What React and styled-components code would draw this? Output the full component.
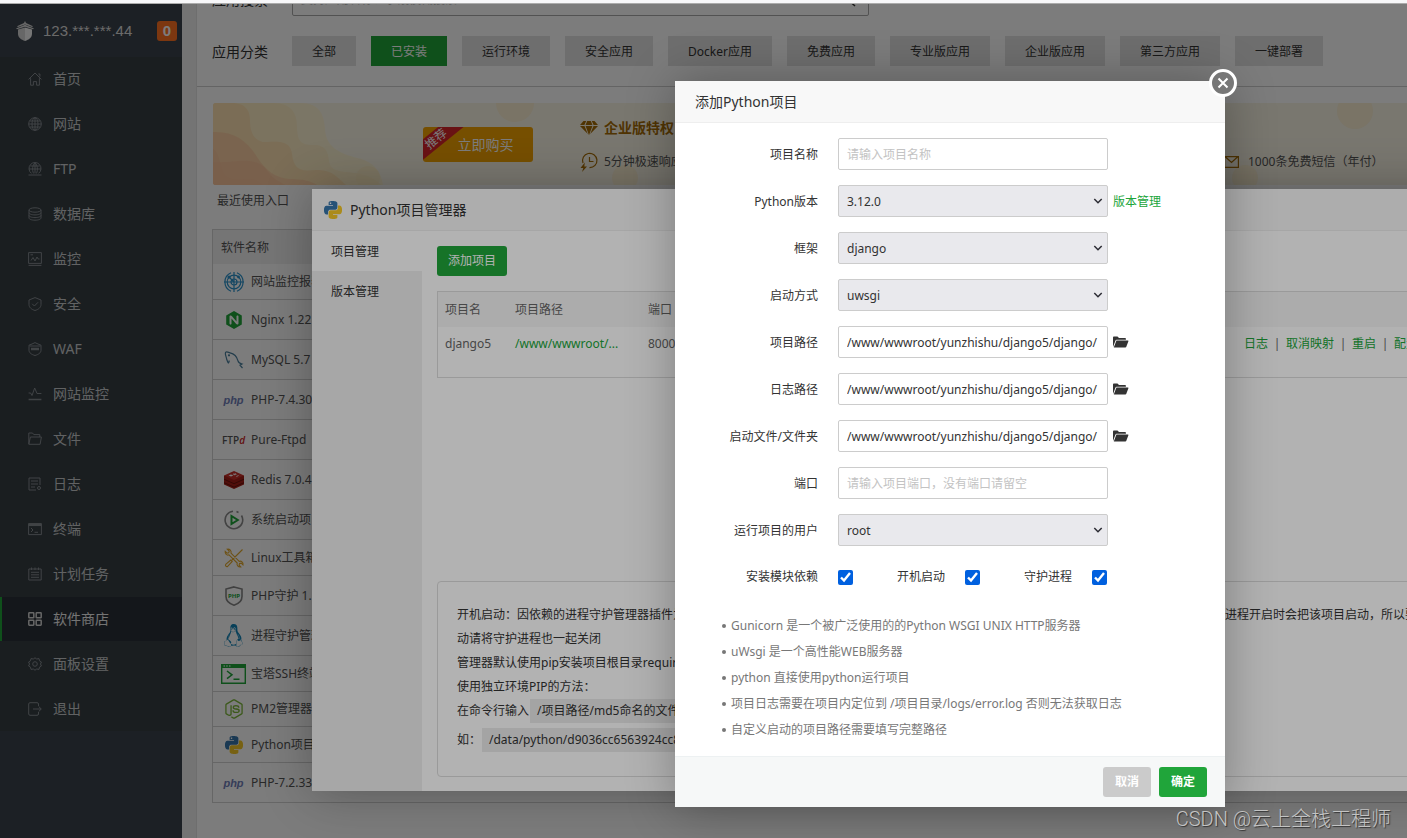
import React, { useState } from 'react'
import styled, { createGlobalStyle, css } from 'styled-components'
import { FaLinux, FaNodeJs } from 'react-icons/fa'
import { SiNginx } from 'react-icons/si'

const GlobalStyle = createGlobalStyle`
    * {
        box-sizing: border-box;
    }
    body {
        margin: 0;
        font-family: 'Noto Sans', 'Noto Sans CJK SC', sans-serif;
        font-size: 12px;
        line-height: 20px;
        color: #333;
        overflow: hidden;
    }
    input, select, button {
        font: inherit;
        color: inherit;
    }
    a {
        text-decoration: none;
    }
    svg {
        display: block;
        flex-shrink: 0;
    }
`

/* ---------- icons ---------- */

const Stroke = ({ size = 14, children, width = 1 }) => (
    <svg width={size} height={size} viewBox="0 0 14 14" fill="none" stroke="currentColor" strokeWidth={width} strokeLinejoin="round">
        {children}
    </svg>
)

const menuIcons = {
    home: <Stroke><path d="M.6 7.4 7 1l6.4 6.4M10.3 2h1.6v2.6M2.6 6.2v7h2.8V9.6h3.2v3.6h2.8v-7" /></Stroke>,
    site: <Stroke><circle cx="7" cy="7" r="6.3" /><ellipse cx="7" cy="7" rx="3" ry="6.3" /><path d="M.8 7h12.4M7 .7v12.6M1.7 4h10.6M1.7 10h10.6" /></Stroke>,
    ftp: <Stroke><path d="M3.500 11.400a6 6 0 1 1 7 0M5.500 11.400C4 8 4.300 3 7 1c2.700 2 3 7 1.500 10.400M1 7h12M2.300 4h9.400M7 1v10.400M.5 13h13" /></Stroke>,
    db: <Stroke><ellipse cx="7" cy="3" rx="6" ry="2.2" /><path d="M1 3v8c0 1.200 2.700 2.200 6 2.200s6-1 6-2.200V3M1 5.700c0 1.200 2.700 2.200 6 2.200s6-1 6-2.200M1 8.400c0 1.200 2.700 2.200 6 2.200s6-1 6-2.200" /></Stroke>,
    monitor: <Stroke><path d="M.6.6h12.800v10.800H.6zM.6 13.400h12.800M3 8.500l2-3 2 3.500L9 5l1.200 2h1.300M2.500 2.800H5" /></Stroke>,
    shield: <Stroke><path d="M7 .6 13 3v4.500c0 3-2.500 4.900-6 6-3.500-1.100-6-3-6-6V3zM4.200 6.800 6.400 9 10 5.300" /></Stroke>,
    waf: <Stroke><path d="M1 4.500V3.200L4 2l3-1.400L10 2l3 1.200v5.100c0 2.500-2.500 4.200-6 5.200-3.500-1-6-2.700-6-5.200zM1.500 4h11" /><path d="M3 7h8" strokeWidth="2.500" /></Stroke>,
    pulse: <Stroke><path d="M.6 6h2L4 8.500 6.700 1 9 6.500h4.400" /><path d="M.6 12.500h12.800" strokeWidth="1.500" /></Stroke>,
    folder: <Stroke><path d="M.8 12V1h3.700l1.300 1.600h6V5M.8 12.300 2.400 5h11l-1.300 7.300z" /></Stroke>,
    log: <Stroke><path d="M8 13H1V1h11v7M3 4h7M3 7h7M3 10h4" /><circle cx="11" cy="11" r="1.500" /></Stroke>,
    terminal: <Stroke><path d="M.6 1.600h12.800v11H.6z" /><path d="M.6 2.800h12.800" strokeWidth="2.500" /><path d="m3 6 2 2-2 2M6.500 10.300H10" /></Stroke>,
    cron: <Stroke><path d="M.8 2h12.400v11H.8zM3.500.5V3M7 .5V3M10.500.5V3M3 5.300h8M3 7.800h8M3 10.300h8" /></Stroke>,
    store: <Stroke width={1.5}><rect x=".8" y=".8" width="5" height="5" rx=".6" /><rect x="8.200" y=".8" width="5" height="5" rx=".6" /><rect x=".8" y="8.200" width="5" height="5" rx=".6" /><rect x="8.200" y="8.200" width="5" height="5" rx=".6" /></Stroke>,
    setting: <Stroke><path d="M5.300 2 7 .8 8.700 2l2.300-.4.500 2.200 1.900 1.200-.9 2 .9 2-1.900 1.200-.5 2.200-2.300-.4L7 13.200 5.300 12l-2.300.4-.5-2.200L.6 9l.9-2-.9-2 1.900-1.200.5-2.200z" /><circle cx="7" cy="7" r="2.300" /></Stroke>,
    exit: <Stroke><path d="M10.500 4V2A1.400 1.400 0 0 0 9 .7H2A1.400 1.400 0 0 0 .7 2v10A1.400 1.400 0 0 0 2 13.300h7a1.400 1.400 0 0 0 1.500-1.300v-2M5 7h8M10.700 4.500 13.300 7l-2.600 2.500" /></Stroke>,
}

const TowerLogo = () => (
    <svg width="18" height="20" viewBox="0 0 18 20" fill="#d5d5d5">
        <path d="M9 0 10 2 17 5.300 16 6 9 3.500 2 6 1 5.300 8 2z" />
        <path d="M9 3.800 18 7.500l-1 .8L9 5.800 1 8.300l-1-.8z" />
        <path d="M2 8.600 9 6.500v13.400C5 18.800 2.200 16.500 2 13z" />
        <path d="M16 8.600 9 6.500v13.400c4-1.100 6.800-3.400 7-6.900z" fill="#f2f2f2" />
    </svg>
)

const PythonLogo = ({ size = 18 }) => (
    <svg width={size} height={size} viewBox="0 0 24 24">
        <path fill="#3776ab" d="M14.25.18l.9.2.73.26.59.3.45.32.34.34.25.34.16.33.1.3.04.26.02.2-.01.13V8.5l-.05.63-.13.55-.21.46-.26.38-.3.31-.33.25-.35.19-.35.14-.33.1-.3.07-.26.04-.21.02H8.77l-.69.05-.59.14-.5.22-.41.27-.33.32-.27.35-.2.36-.15.37-.1.35-.07.32-.04.27-.02.21v3.06H3.17l-.21-.03-.28-.07-.32-.12-.35-.18-.36-.26-.36-.36-.35-.46-.32-.59-.28-.73-.21-.88-.14-1.05-.05-1.23.06-1.22.16-1.04.24-.87.32-.71.36-.57.4-.44.42-.33.42-.24.4-.16.36-.1.32-.05.24-.01h.16l.06.01h8.16v-.83H6.18l-.01-2.75-.02-.37.05-.34.11-.31.17-.28.25-.26.31-.23.38-.2.44-.18.51-.15.58-.12.64-.1.71-.06.77-.04.84-.02 1.27.05zm-6.3 1.98l-.23.33-.08.41.08.41.23.34.33.22.41.09.41-.09.33-.22.23-.34.08-.41-.08-.41-.23-.33-.33-.22-.41-.09-.41.09z" />
        <path fill="#f5c828" d="M21.04 6.11l.28.06.32.12.35.18.36.27.36.35.35.47.32.59.28.73.21.88.14 1.04.05 1.23-.06 1.23-.16 1.04-.24.86-.32.71-.36.57-.4.45-.42.33-.42.24-.4.16-.36.09-.32.05-.24.02-.16-.01h-8.22v.82h5.84l.01 2.76.02.36-.05.34-.11.31-.17.29-.25.25-.31.24-.38.2-.44.17-.51.15-.58.13-.64.09-.71.07-.77.04-.84.01-1.27-.04-1.07-.14-.9-.2-.73-.25-.59-.3-.45-.33-.34-.34-.25-.34-.16-.33-.1-.3-.04-.25-.02-.2.01-.13v-5.34l.05-.64.13-.54.21-.46.26-.38.3-.32.33-.24.35-.2.35-.14.33-.1.3-.06.26-.04.21-.02.13-.01h5.84l.69-.05.59-.14.5-.21.41-.28.33-.32.27-.35.2-.36.15-.36.1-.35.07-.32.04-.28.02-.21V6.07h2.09l.14.01z" />
    </svg>
)

const RadarIcon = () => (
    <svg width="22" height="20" viewBox="0 0 22 20" fill="none" stroke="#2a92cc" strokeWidth="1.200">
        <path d="M8 .8A10 10 0 0 0 8 19.200M14 .8a10 10 0 0 1 0 18.400" />
        <circle cx="11" cy="10" r="6.800" />
        <circle cx="11" cy="10" r="3" />
        <path d="M11 0v20M1 10h20M6 5l5 5" />
        <circle cx="6" cy="5" r="1" fill="#2a92cc" />
        <circle cx="15.500" cy="5" r=".8" fill="#2a92cc" />
    </svg>
)

const DolphinIcon = () => (
    <svg width="20" height="20" viewBox="0 0 20 20" fill="none" stroke="#4a7f9c" strokeWidth="1.200">
        <path d="M2.500 8.500C2 6 .8 4 1.500 2.500c1-1.500 3 0 4.500.3 4 .8 7 4 8 8 .3 1.400 1.500 2.500 4 3.200l-2 1.200 2.500 2.800M2.500 8.500c.5 1.500 1 3.500 1.800 4.500.9-.5.700-1.800 1-2.500" />
        <circle cx="5" cy="5.300" r=".5" />
    </svg>
)

const RedisIcon = () => (
    <svg width="20" height="18" viewBox="0 0 20 18">
        <path fill="#a51f17" d="M0 4.500v9L10 18l10-4.500v-9z" />
        <path fill="#c9302a" d="M0 4.500 10 0l10 4.500L10 9z" />
        <path d="M0 8.200 10 12.700l10-4.500M0 11.700l10 4.400 10-4.400" fill="none" stroke="#6d120d" strokeWidth="1" />
        <path fill="#fff" d="m4.500 4.200 2.500-.8 2.400 1-2.400 1zM9 2.200l1.500.6 1.800-.7-.6 1 1.500.6-2 .1-.5.700-.4-.7-2-.2 1.300-.5zM12.500 5l3-1.200-3 2.500z" />
    </svg>
)

const BootIcon = () => (
    <svg width="20" height="20" viewBox="0 0 20 20" fill="none" strokeWidth="1.600">
        <path stroke="#8a8a8a" d="M9 1.200A8.800 8.800 0 1 0 17.500 5.500M12.500 1.600l2 .9" />
        <path stroke="#20a53a" strokeWidth="2" d="M7.500 6v8l6.300-4z" />
    </svg>
)

const ToolsIcon = () => (
    <svg width="20" height="20" viewBox="0 0 20 20" fill="none" stroke="#e2a92d" strokeWidth="1.100">
        <path d="M18.500 1.500 8 12M6.800 12l1.400 1.400-4.500 5c-1.400.7-2.800-.6-2-2zM3.200 1.200l2 1.900-.5 1.700-1.700.3-1.800-1.800C.8 6 3 7.700 5 6.800l8.200 8.200c-.8 2.200 1 4.200 3.500 3.900l-1.600-1.800.4-1.600 1.700-.4 1.800 1.800c.5-2.600-1.800-4.300-3.800-3.500L7 5.200C7.700 3 5.800.8 3.200 1.200z" />
    </svg>
)

const PhpGuardIcon = () => (
    <svg width="18" height="20" viewBox="0 0 18 20" fill="none">
        <path stroke="#858585" strokeWidth="1.600" d="M9 .9 17 3v7.500c0 4.300-3.200 7.200-8 8.700-4.800-1.500-8-4.400-8-8.700V3z" />
        <text x="9" y="11.500" fontSize="6" fontWeight="700" textAnchor="middle" fill="#20a53a">PHP</text>
    </svg>
)

const SshIcon = () => (
    <svg width="25" height="20" viewBox="0 0 25 20" fill="none">
        <path stroke="#20a53a" strokeWidth="1.400" d="M.7.7h23.600v18.600H.7z" />
        <path fill="#20a53a" d="M0 0h25v4H0z" />
        <path stroke="#bfe6c7" strokeWidth="1.400" d="M2.500 2H4m1.200 0h1.500M8 2h1.500" />
        <path stroke="#20a53a" strokeWidth="1.500" d="m6 7 5 3.800-5 3.800M12.500 15.300h6" />
    </svg>
)

const FolderOpenIcon = () => (
    <svg width="16" height="12" viewBox="0 0 16 12" fill="#333">
        <path d="M0 11V1.500C0 1 .4.500 1 .5h3.500L6 2h6c.5 0 .9.400.9 1v.8H3.600c-.5 0-.9.200-1.100.7z" />
        <path d="M3.400 4.600H15c.4 0 .5.200.4.600l-2.200 5.900c-.1.300-.4.500-.8.500H.8z" />
    </svg>
)

const ChevronIcon = () => (
    <svg width="10" height="10" viewBox="0 0 10 10" fill="none" stroke="#2b2b33" strokeWidth="1.500">
        <path d="M1.300 3 5 6.700 8.700 3" />
    </svg>
)

const GemIcon = () => (
    <svg width="18" height="16" viewBox="0 0 18 16" fill="#a56c06">
        <path d="M3.500 1h2.700L4.400 5H0zM7.200 1h3.600l1.700 4H5.500zM11.800 1h2.700L18 5h-4.400zM0 6h4.500l3.300 8zM5.600 6h6.800L9 15.200zM13.500 6H18l-7.800 8z" />
    </svg>
)

const QuickIcon = () => (
    <svg width="18" height="20" viewBox="0 0 18 20" fill="none" stroke="#a56c06" strokeWidth="1.200">
        <path d="M3 11A7.200 7.200 0 1 1 9.500 15.700M9.500 5v4.500h4" />
        <path d="M4.800 10.500.5 16h2.800L2 20l5-5.500H4.300z" fill="#a56c06" stroke="none" />
    </svg>
)

const MailIcon = () => (
    <svg width="15" height="12" viewBox="0 0 15 12" fill="none" stroke="#a56c06" strokeWidth="1.200">
        <path d="M.6.6h13.800v10.800H.6zM1.500 1l6 5.500 6-5.500" />
    </svg>
)

/* ---------- page shell ---------- */

const Shell = styled.div`
    height: 100vh;
    display: flex;
    flex-direction: column;
    overflow: hidden;
`

const TopStrip = styled.div`
    flex: 0 0 4px;
    background: #f7f7f9;
    border-bottom: 1px solid #ababab;
`

const Stage = styled.div`
    flex: 1;
    min-height: 0;
    position: relative;
    display: flex;
    overflow: hidden;
    background: #f0f0f0;
`

const Sidebar = styled.aside`
    flex: 0 0 182px;
    background: #3c444d;
`

const Host = styled.header`
    height: 53px;
    display: flex;
    align-items: center;
    padding: 0 5px 0 16px;
    gap: 9px;
    font-family: 'Liberation Sans', sans-serif;
    font-size: 15px;
    color: #dcdcdc;
`

const Badge = styled.span`
    margin-left: auto;
    width: 20px;
    height: 20px;
    border-radius: 3px;
    background: #ff7322;
    color: #fff;
    font-weight: 700;
    text-align: center;
`

const Menu = styled.nav`
    display: flex;
    flex-direction: column;
    gap: 1px;
    background: #373f44;
`

const MenuItem = styled.a`
    height: 44px;
    display: flex;
    align-items: center;
    gap: 11px;
    padding-left: 26px;
    border-left: 2px solid transparent;
    font-size: 14px;
    color: #c9cbcd;
    svg {
        color: #858b90;
    }
    ${({ $active }) => $active && css`
        background: #2c3138;
        border-left-color: #20a53a;
        color: #eee;
        svg {
            color: #d5d5d5;
        }
    `}
`

const Main = styled.main`
    flex: 1;
    min-width: 0;
    margin-left: 14px;
    border-left: 1px solid #e2e2e2;
    background: #fff;
    overflow: hidden;
`

/* only the bottom edge of the search box is still in view */
const SearchRow = styled.div`
    height: 12px;
    display: flex;
    align-items: flex-end;
    padding-left: 15px;
    label {
        width: 80px;
        font-size: 14px;
        line-height: 32px;
    }
`

const SearchBox = styled.div`
    width: 577px;
    height: 32px;
    display: flex;
    align-items: center;
    padding: 0 12px 0 8px;
    border: 1px solid #aaa;
    border-radius: 2px;
    input {
        flex: 1;
        border: 0;
        padding: 0;
        background: none;
        outline: none;
    }
    input::placeholder {
        color: #bbb;
    }
`

const Categories = styled.div`
    display: flex;
    align-items: center;
    gap: 15px;
    padding: 20px 0 20px 15px;
    border-bottom: 1px solid #cfcfcf;
    white-space: nowrap;
`

const CategoryTitle = styled.span`
    width: 65px;
    padding-top: 2px;
    font-size: 14px;
`

const Category = styled.button`
    height: 30px;
    padding: 2px 20px 0;
    border: 0;
    background: ${({ $active }) => ($active ? '#20a53a' : '#e3e3e3')};
    color: ${({ $active }) => ($active ? '#fff' : '#333')};
`

const Body = styled.div`
    padding: 16px 0 0 15px;
`

const Banner = styled.section`
    display: grid;
    height: 82px;
    margin-left: 1px;
    border-radius: 3px 0 0 3px;
    overflow: hidden;
    background: #faf5e6;
    > * {
        grid-area: 1 / 1;
    }
`

const BannerContent = styled.div`
    display: flex;
    align-items: center;
    gap: 47px;
    padding-left: 210px;
    white-space: nowrap;
`

const BuyButton = styled.button`
    position: relative;
    width: 110px;
    height: 35px;
    padding: 2px 0 0 15px;
    border: 0;
    border-radius: 3px;
    overflow: hidden;
    background: #f3a200;
    font-size: 14px;
    color: #fff;
`

const Ribbon = styled.span`
    position: absolute;
    top: 4px;
    left: -20px;
    width: 66px;
    height: 16px;
    background: #d9262c;
    font-size: 12px;
    line-height: 16px;
    text-align: center;
    transform: rotate(-39deg);
`

const Perks = styled.div`
    display: grid;
    grid-template-columns: 644px auto;
    row-gap: 14px;
    padding-top: 2px;
    color: #555;
    div {
        display: grid;
        grid-template-columns: 18px auto;
        justify-content: start;
        align-items: center;
        gap: 6px;
        height: 20px;
    }
    h4 {
        margin: 0;
        font-size: 14px;
        color: #a56c06;
    }
`

const Recent = styled.p`
    margin: 6px 0 18px 5px;
    color: #555;
`

const SoftTable = styled.table`
    width: 100%;
    border-collapse: separate;
    border-spacing: 0;
    border: 1px solid #d3d3d3;
    border-width: 1px 0 0 1px;
    color: #555;
    th {
        height: 34px;
        padding: 2px 8px 0;
        background: #f1f1f1;
        font-weight: 400;
        text-align: left;
    }
`

const SoftCell = styled.td`
    height: ${({ $h }) => $h}px;
    padding: 0 0 0 8px;
    border-bottom: 1px solid #d3d3d3;
    > span {
        display: grid;
        grid-template-columns: 25px auto;
        justify-content: start;
        justify-items: center;
        align-items: center;
        gap: 5px;
    }
`

const PhpMark = styled.b`
    font-family: 'Liberation Sans', sans-serif;
    font-size: 11px;
    font-style: italic;
    color: #7080b8;
`

const FtpMark = styled.b`
    font-family: 'Open Sans', sans-serif;
    font-size: 10px;
    font-weight: 600;
    i {
        color: #cc1f1f;
    }
`

/* ---------- layered windows ---------- */

const Mask = styled.div`
    position: absolute;
    inset: 0;
    background: rgba(0, 0, 0, 0.3);
`

const Layer = styled.section`
    position: absolute;
    top: ${({ $top }) => $top}px;
    left: ${({ $left }) => $left}px;
    width: ${({ $width }) => $width}px;
    background: #fff;
    border-radius: 2px;
    box-shadow: 1px 1px 50px rgba(0, 0, 0, 0.3);
`

const LayerTitle = styled.h3`
    display: flex;
    align-items: center;
    gap: 8px;
    height: 42px;
    margin: 0;
    padding-left: ${({ $pad }) => $pad}px;
    border-bottom: 1px solid #eee;
    background: #f8f8f8;
    font-size: 14px;
    font-weight: 400;
`

const ManagerBody = styled.div`
    display: flex;
    height: 560px;
`

const Tabs = styled.nav`
    flex: 0 0 110px;
    background: #f0f0f0;
`

const Tab = styled.button`
    display: block;
    width: 100%;
    height: 40px;
    padding: 2px 19px 0;
    border: 0;
    background: ${({ $active }) => ($active ? '#fff' : 'none')};
    text-align: left;
`

const Panel = styled.div`
    flex: 1;
    min-width: 0;
    display: flex;
    flex-direction: column;
    align-items: flex-start;
    padding: 15px 15px 14px;
`

const Button = styled.button`
    height: 30px;
    padding: 0 ${({ $pad = 12 }) => $pad}px;
    border: 0;
    border-radius: 3px;
    background: ${({ $muted }) => ($muted ? '#cbcbcb' : '#20a53a')};
    color: #fff;
    font-weight: ${({ $bold }) => ($bold ? 700 : 400)};
`

const ProjectTable = styled.table`
    width: 100%;
    margin-top: 15px;
    table-layout: fixed;
    border-collapse: separate;
    border-spacing: 0;
    border: 1px solid #ddd;
    color: #666;
    th, td {
        padding: 0 7px;
        font-weight: 400;
        text-align: left;
        white-space: nowrap;
    }
    th {
        height: 35px;
        background: #f6f6f6;
    }
    th:last-child {
        text-align: right;
    }
    td {
        height: 50px;
        padding-top: 7px;
        vertical-align: top;
    }
    a {
        color: #20a53a;
    }
`

const Divider = styled.span`
    display: inline-block;
    width: 18px;
    text-align: center;
    &::before {
        content: '|';
    }
`

const Help = styled.div`
    width: 100%;
    height: 196px;
    margin-top: auto;
    padding: 21px 19px;
    border: 1px solid #ddd;
    border-radius: 4px;
    line-height: 24px;
    white-space: nowrap;
    overflow: hidden;
    p {
        margin: 0;
    }
    p + p:last-child {
        margin-top: 5px;
    }
    code {
        display: inline-block;
        margin-left: 1px;
        padding: 0 7px;
        background: #ebebeb;
        font-family: inherit;
    }
`

const CloseButton = styled.button`
    position: absolute;
    top: -12px;
    right: -12px;
    width: 28px;
    height: 28px;
    display: grid;
    place-items: center;
    padding: 0;
    border: 3px solid #fff;
    border-radius: 50%;
    background: #777;
    color: #fff;
`

const Form = styled.form`
    display: flex;
    flex-direction: column;
`

const Fields = styled.div`
    display: flex;
    flex-direction: column;
    gap: 15px;
    padding: 15px 0;
`

const Row = styled.div`
    display: grid;
    grid-template-columns: 143px 270px auto;
    justify-content: start;
    align-items: center;
    min-height: 32px;
    > label {
        padding-top: 2px;
        text-align: right;
    }
    > :nth-child(2) {
        margin-left: 20px;
        margin-right: -20px;
    }
    > :nth-child(3) {
        margin-left: 25px;
    }
    a {
        padding-top: 2px;
        color: #20a53a;
    }
`

const TextInput = styled.input`
    height: 32px;
    padding: 0 0 0 8px;
    border: 1px solid #ccc;
    border-radius: 2px;
    background: #fff;
    outline: none;
    &::placeholder {
        color: #c3c3c3;
    }
`

const SelectBox = styled.div`
    display: grid;
    align-items: center;
    > * {
        grid-area: 1 / 1;
    }
    select {
        height: 32px;
        padding: 2px 8px 0;
        border: 1px solid #ccc;
        border-radius: 2px;
        background: #e9e9ed;
        appearance: none;
    }
    svg {
        justify-self: end;
        margin-right: 5px;
        pointer-events: none;
    }
`

const IconButton = styled.button`
    padding: 0;
    border: 0;
    background: none;
`

const Checks = styled.div`
    display: flex;
    align-items: center;
    height: 32px;
    label {
        display: flex;
        align-items: center;
        justify-content: flex-end;
        gap: 20px;
        width: 127px;
    }
    label:first-child {
        width: 178px;
    }
    input {
        width: 15px;
        height: 15px;
        margin: 0;
        accent-color: #0060df;
    }
`

const Notes = styled.ul`
    margin: 0;
    padding: 5px 20px 13px 56px;
    list-style: none;
    line-height: 26px;
    color: #777;
    li {
        display: flex;
        align-items: center;
        gap: 5px;
    }
    li::before {
        content: '';
        width: 4px;
        height: 4px;
        margin-left: -9px;
        border-radius: 50%;
        background: #777;
    }
`

const Footer = styled.footer`
    display: flex;
    justify-content: flex-end;
    gap: 8px;
    padding: 10px 18px;
    border-top: 1px solid #edf1f2;
    background: #f6f8f8;
`

const Watermark = styled.div`
    position: absolute;
    right: 16px;
    bottom: 4px;
    font-family: Roboto, 'Noto Sans CJK SC', sans-serif;
    font-size: 20px;
    font-weight: 300;
    line-height: 30px;
    color: #c4c4c4;
    text-shadow: 1px 1px 1px #333;
`

/* ---------- data ---------- */

const menu = [
    ['home', '首页'],
    ['site', '网站'],
    ['ftp', 'FTP'],
    ['db', '数据库'],
    ['monitor', '监控'],
    ['shield', '安全'],
    ['waf', 'WAF'],
    ['pulse', '网站监控'],
    ['folder', '文件'],
    ['log', '日志'],
    ['terminal', '终端'],
    ['cron', '计划任务'],
    ['store', '软件商店'],
    ['setting', '面板设置'],
    ['exit', '退出'],
]

const categories = ['全部', '已安装', '运行环境', '安全应用', 'Docker应用', '免费应用', '专业版应用', '企业版应用', '第三方应用', '一键部署']

const php = <PhpMark>php</PhpMark>

const softs = [
    { name: '网站监控报表', h: 36, icon: <RadarIcon /> },
    { name: 'Nginx 1.22', h: 40, icon: <SiNginx size={18} color="#20a53a" /> },
    { name: 'MySQL 5.7', h: 40, icon: <DolphinIcon /> },
    { name: 'PHP-7.4.30', h: 40, icon: php },
    { name: 'Pure-Ftpd', h: 40, icon: <FtpMark>FTP<i>d</i></FtpMark> },
    { name: 'Redis 7.0.4', h: 40, icon: <RedisIcon /> },
    { name: '系统启动项', h: 40, icon: <BootIcon /> },
    { name: 'Linux工具箱', h: 36, icon: <ToolsIcon /> },
    { name: 'PHP守护 1.', h: 40, icon: <PhpGuardIcon /> },
    { name: '进程守护管理', h: 40, icon: <FaLinux size={23} color="#1284b8" /> },
    { name: '宝塔SSH终端', h: 36, icon: <SshIcon /> },
    { name: 'PM2管理器', h: 35, icon: <FaNodeJs size={20} color="#7db83a" /> },
    { name: 'Python项目', h: 36, icon: <PythonLogo /> },
    { name: 'PHP-7.2.33', h: 40, icon: php },
]

const path = '/www/wwwroot/yunzhishu/django5/django/'

const fields = [
    { id: 'name', label: '项目名称', placeholder: '请输入项目名称' },
    { id: 'version', label: 'Python版本', options: ['3.12.0'], link: '版本管理' },
    { id: 'framework', label: '框架', options: ['django', 'flask'] },
    { id: 'mode', label: '启动方式', options: ['uwsgi', 'gunicorn', 'python'] },
    { id: 'path', label: '项目路径', value: path, browse: true },
    { id: 'logs', label: '日志路径', value: path, browse: true },
    { id: 'entry', label: '启动文件/文件夹', value: path, browse: true },
    { id: 'port', label: '端口', placeholder: '请输入项目端口，没有端口请留空' },
    { id: 'user', label: '运行项目的用户', options: ['root', 'www'] },
]

const notes = [
    'Gunicorn 是一个被广泛使用的的Python WSGI UNIX HTTP服务器',
    'uWsgi 是一个高性能WEB服务器',
    'python 直接使用python运行项目',
    '项目日志需要在项目内定位到 /项目目录/logs/error.log 否则无法获取日志',
    '自定义启动的项目路径需要填写完整路径',
]

/* ---------- components ---------- */

const SideMenu = () => (
    <Sidebar>
        <Host>
            <TowerLogo />
            <span>123.***.***.44</span>
            <Badge>0</Badge>
        </Host>
        <Menu>
            {menu.map(([icon, label]) => (
                <MenuItem key={icon} href="#" $active={icon === 'store'}>
                    {menuIcons[icon]}
                    {label}
                </MenuItem>
            ))}
        </Menu>
    </Sidebar>
)

const BannerArt = () => (
    <svg width="1250" height="82" viewBox="0 0 1250 82">
        <path fill="#fdf3d2" d="M0 0h87c20 0 24 12 25 26 1 18 14 24 32 29 18 4 24 14 26 27H0z" />
        <path fill="#fdecc4" d="M0 0h60c20 0 24 12 24 24 0 16 6 18 16 18 14 0 15 8 16 16 2 12 14 10 26 12 14 2 20 6 26 12H0z" />
        <path fill="#fce0b0" d="M0 0h18c16 0 19 9 19 18 0 16 8 22 18 21 20-2 23 5 24 12 2 18 12 17 24 16 16-1 22 8 30 15H0z" />
        <path fill="#fbcfa4" d="M0 29c20-1 34 8 44 25 9 14 19 21 32 22 14 0 22 2 28 6H0z" />
        <path fill="#fac09a" d="M0 59c16 1 24-2 36-1 16 1 18 12 26 18l10 6H0z" opacity=".6" />
        <path fill="#fac09a" d="M0 46c8 4 6 22 14 28 10 6 22-1 30 4l6 4H0z" opacity=".5" />
        <g fill="#fbe9bd" opacity=".5">
            <circle cx="302" cy="0" r="19" />
            <circle cx="155" cy="75" r="12" />
            <circle cx="412" cy="75" r="13" />
            <circle cx="1032" cy="75" r="13" />
            <circle cx="1142" cy="8" r="18" />
        </g>
    </svg>
)

const Store = () => (
    <Main>
        <SearchRow>
            <label htmlFor="search">应用搜索</label>
            <SearchBox>
                <input id="search" placeholder="支持应用名称、字段模糊搜索" />
                <Stroke width={1.5}><circle cx="5.500" cy="5.500" r="4.500" /><path d="m8.500 9 4.500 4" /></Stroke>
            </SearchBox>
        </SearchRow>
        <Categories>
            <CategoryTitle>应用分类</CategoryTitle>
            {categories.map((item) => (
                <Category key={item} $active={item === '已安装'}>{item}</Category>
            ))}
        </Categories>
        <Body>
            <Banner>
                <BannerArt />
                <BannerContent>
                    <BuyButton><Ribbon>推荐</Ribbon>立即购买</BuyButton>
                    <Perks>
                        <div><GemIcon /><h4>企业版特权</h4></div>
                        <span />
                        <div><QuickIcon />5分钟极速响应</div>
                        <div><MailIcon />1000条免费短信（年付）</div>
                    </Perks>
                </BannerContent>
            </Banner>
            <Recent>最近使用入口</Recent>
            <SoftTable>
                <thead>
                    <tr><th>软件名称</th></tr>
                </thead>
                <tbody>
                    {softs.map(({ name, h, icon }) => (
                        <tr key={name}>
                            <SoftCell $h={h}><span>{icon}<span>{name}</span></span></SoftCell>
                        </tr>
                    ))}
                </tbody>
            </SoftTable>
        </Body>
    </Main>
)

const Manager = () => (
    <Layer $top={185} $left={312} $width={1200}>
        <LayerTitle $pad={12}><PythonLogo />Python项目管理器</LayerTitle>
        <ManagerBody>
            <Tabs>
                <Tab $active>项目管理</Tab>
                <Tab>版本管理</Tab>
            </Tabs>
            <Panel>
                <Button $pad={11}>添加项目</Button>
                <ProjectTable>
                    <colgroup>
                        <col width="70" />
                        <col width="133" />
                        <col />
                        <col width="259" />
                    </colgroup>
                    <thead>
                        <tr><th>项目名</th><th>项目路径</th><th>端口</th><th>操作</th></tr>
                    </thead>
                    <tbody>
                        <tr>
                            <td>django5</td>
                            <td><a href="#">/www/wwwroot/...</a></td>
                            <td>8000</td>
                            <td>
                                <a href="#">日志</a><Divider /><a href="#">取消映射</a><Divider /><a href="#">重启</a><Divider /><a href="#">配置</a>
                            </td>
                        </tr>
                    </tbody>
                </ProjectTable>
                <Help>
                    <p>开机启动：因依赖的进程守护管理器插件为开机自启动，若项目开启了守护进程，不论该项目是否选择开机启动，在服务器重启之后，那么该守护进程开启时会把该项目启动，所以要关闭开机启</p>
                    <p>动请将守护进程也一起关闭</p>
                    <p>管理器默认使用pip安装项目根目录requirements.txt内的模块</p>
                    <p>使用独立环境PIP的方法：</p>
                    <p>在命令行输入<code>/项目路径/md5命名的文件夹/bin/pip install</code></p>
                    <p>如：<code>/data/python/d9036cc6563924cc8e0b/bin/pip install flask</code></p>
                </Help>
            </Panel>
        </ManagerBody>
    </Layer>
)

const Field = ({ id, label, placeholder, value, options, link, browse }) => (
    <Row>
        <label htmlFor={id}>{label}</label>
        {options ? (
            <SelectBox>
                <select id={id}>
                    {options.map((o) => <option key={o}>{o}</option>)}
                </select>
                <ChevronIcon />
            </SelectBox>
        ) : (
            <TextInput id={id} type="text" placeholder={placeholder} defaultValue={value} />
        )}
        {link && <a href="#">{link}</a>}
        {browse && <IconButton type="button" aria-label="选择目录"><FolderOpenIcon /></IconButton>}
    </Row>
)

const AddProject = () => {
    const [checks, setChecks] = useState({ 安装模块依赖: true, 开机启动: true, 守护进程: true })

    return (
        <Layer $top={77} $left={675} $width={550}>
            <LayerTitle $pad={20}>添加Python项目</LayerTitle>
            <CloseButton aria-label="关闭">
                <Stroke width={2}><path d="m2.500 2.500 9 9M11.500 2.500l-9 9" /></Stroke>
            </CloseButton>
            <Form onSubmit={(e) => e.preventDefault()}>
                <Fields>
                    {fields.map((f) => <Field key={f.id} {...f} />)}
                    <Checks>
                        {Object.keys(checks).map((key) => (
                            <label key={key}>
                                {key}
                                <input
                                    type="checkbox"
                                    checked={checks[key]}
                                    onChange={() => setChecks({ ...checks, [key]: !checks[key] })}
                                />
                            </label>
                        ))}
                    </Checks>
                </Fields>
                <Notes>
                    {notes.map((n) => <li key={n}>{n}</li>)}
                </Notes>
                <Footer>
                    <Button type="button" $muted $bold>取消</Button>
                    <Button type="submit" $bold>确定</Button>
                </Footer>
            </Form>
        </Layer>
    )
}

const App = () => (
    <Shell>
        <GlobalStyle />
        <TopStrip />
        <Stage>
            <SideMenu />
            <Store />
            <Mask />
            <Manager />
            <Mask />
            <AddProject />
            <Watermark>CSDN @云上全栈工程师</Watermark>
        </Stage>
    </Shell>
)

export default App
